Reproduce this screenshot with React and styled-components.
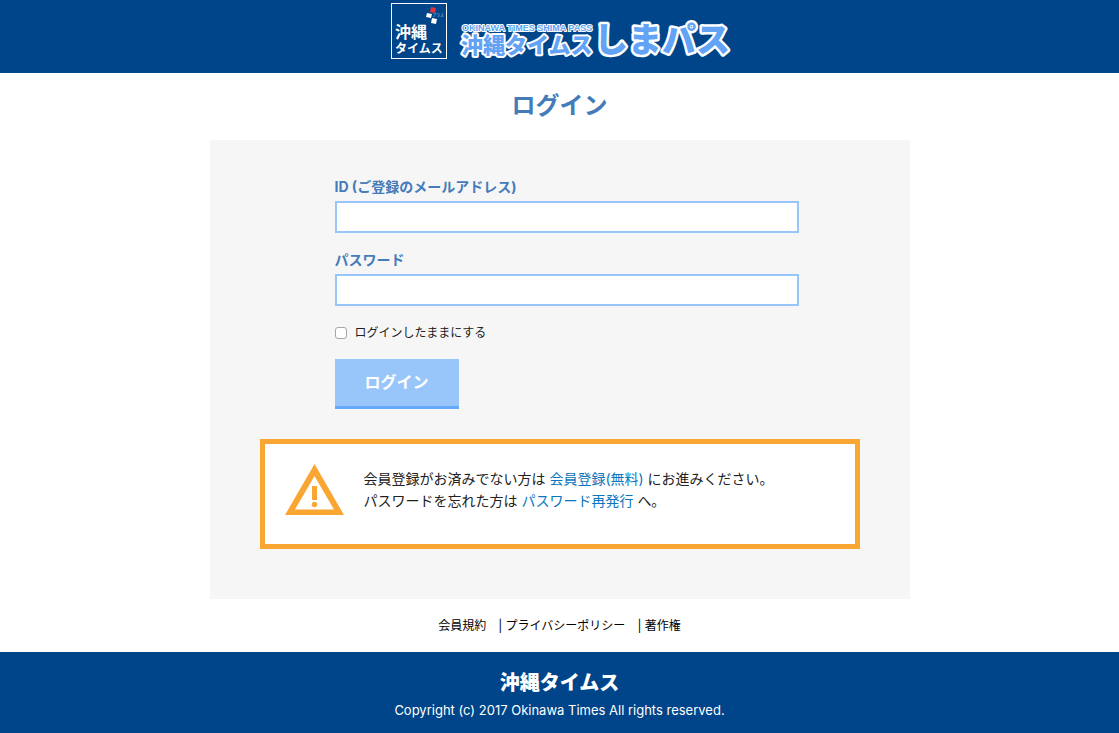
import styled, { createGlobalStyle } from "styled-components";

const GlobalStyle = createGlobalStyle`

    body {
        margin: 0;
        background-color: #ffffff;
        color: #222222;
        font-family: Inter, "Noto Sans CJK JP", sans-serif;
        font-size: 14px;
        line-height: 22px;
    }

    a {
        text-decoration: none;
    }
`;

const Header = styled.header`
    display: flex;
    justify-content: center;
    padding: 3px 0 14px;
    background-color: #004489;

    a, svg {
        display: block;
    }

    svg {
        overflow: visible;
    }
`;

const Title = styled.h1`
    margin: 0;
    padding: 16px 0 17px;
    color: #447bb9;
    font-size: 24px;
    line-height: 34px;
    text-align: center;
`;

const Panel = styled.main`
    box-sizing: border-box;
    width: 100%;
    max-width: 700px;
    margin: 0 auto;
    padding: 36px 50px 50px;
    background-color: #f6f6f6;
`;

const Form = styled.form`
    padding: 0 75px;
`;

const Field = styled.div`
    margin-bottom: 16px;

    label {
        display: block;
        margin-bottom: 3px;
        color: #447bb9;
        font-weight: bold;
    }

    input {
        display: block;
        width: 100%;
        height: 18px;
        padding: 5px;
        border: 2px solid #99c6fa;
        border-radius: 0;
        background-color: #ffffff;
        font-size: 14px;
        outline: none;
    }

    input:focus {
        border-color: #66a9fb;
    }
`;

const Remember = styled.label`
    display: flex;
    align-items: center;
    gap: 8px;
    margin-bottom: 15px;
    font-size: 12px;

    input {
        appearance: none;
        box-sizing: border-box;
        width: 12px;
        height: 12px;
        margin: 0;
        border: 1px solid #a6a6a6;
        border-radius: 3px;
        background-color: #ffffff;
    }

    input:checked {
        background-color: #447bb9;
    }
`;

const SubmitButton = styled.button`
    display: block;
    height: 50px;
    padding: 0 30px 4px;
    border: none;
    border-bottom: 3px solid #66a9fb;
    background-color: #99c6fa;
    color: #ffffff;
    font-family: inherit;
    font-size: 16px;
    font-weight: bold;
    cursor: pointer;
`;

const Notice = styled.div`
    display: flex;
    align-items: flex-start;
    gap: 20px;
    margin-top: 30px;
    padding: 20px 20px 28px;
    border: 5px solid #faa632;
    background-color: #ffffff;

    svg {
        flex-shrink: 0;
    }

    p {
        margin: 0;
        padding-top: 4px;
    }

    a {
        color: #0b76bd;
    }
`;

const FooterLinks = styled.nav`
    padding: 16px 0 15px;
    color: #000000;
    font-size: 12px;
    text-align: center;

    a {
        color: #000000;
    }
`;

const Footer = styled.footer`
    padding: 19px 0 12px;
    background-color: #004489;
    color: #ffffff;
    text-align: center;

    strong {
        display: block;
        font-size: 20px;
        font-weight: 900;
        line-height: 24px;
        margin-bottom: 5px;
    }

    small {
        display: block;
        font-size: 13px;
        line-height: 21px;
    }
`;

const logoFont = '"Noto Sans CJK JP", sans-serif';

function Logo() {
    return (
        <svg width="338" height="56" viewBox="0 0 338 56" fontFamily={logoFont}>
            <rect x="0.5" y="0.5" width="55" height="55" fill="#004489" stroke="#ffffff" />
            <path d="M40 4l5 1-1 5-5-1z" fill="#e23338" />
            <path d="M36 10l5 1-1 4-5-1zM41 15l5 1-1 5-5-1z" fill="#ffffff" />
            <text x="41" y="14" fontSize="4" fill="#b3c6db">プラス</text>
            <g fill="#ffffff" fontWeight="bold">
                <text x="4" y="35" fontSize="16">沖縄</text>
                <text x="4" y="50" fontSize="12">タイムス</text>
            </g>

            <g fill="#62a3f5" stroke="#ffffff" strokeLinejoin="round" paintOrder="stroke" fontWeight="900">
                <text x="70" y="50" fontSize="22" strokeWidth="4">沖縄タイムス</text>
                <text x="203" y="49" fontSize="34" strokeWidth="5">しまパス</text>
                <text x="71" y="28" fontSize="9" strokeWidth="2" fontWeight="bold" fontFamily='"Liberation Sans", sans-serif'>OKINAWA TIMES SHIMA PASS</text>
            </g>
        </svg>
    );
}

function WarningIcon() {
    return (
        <svg width="59" height="52" viewBox="0 0 59 52" fill="#faa632">
            <path fillRule="evenodd" d="M29.5 0L59 51H0zM29.5 12L10 45.500H49z" />
            <path d="M27 22h5v14h-5z" />
            <circle cx="29.500" cy="40.500" r="2.700" />
        </svg>
    );
}

export default function App() {

    function handleSubmit(e) {
        e.preventDefault();
    }

    return (
        <>
            <GlobalStyle />

            <Header>
                <a href="/" aria-label="沖縄タイムス しまパス">
                    <Logo />
                </a>
            </Header>

            <Title>ログイン</Title>

            <Panel>
                <Form onSubmit={handleSubmit}>
                    <Field>
                        <label htmlFor="email">ID (ご登録のメールアドレス)</label>
                        <input id="email" type="text" />
                    </Field>
                    <Field>
                        <label htmlFor="password">パスワード</label>
                        <input id="password" type="password" />
                    </Field>
                    <Remember>
                        <input type="checkbox" />
                        ログインしたままにする
                    </Remember>
                    <SubmitButton type="submit">ログイン</SubmitButton>
                </Form>

                <Notice>
                    <WarningIcon />
                    <p>
                        会員登録がお済みでない方は <a href="/register">会員登録(無料)</a> にお進みください。<br />
                        パスワードを忘れた方は <a href="/reissue">パスワード再発行</a> へ。
                    </p>
                </Notice>
            </Panel>

            <FooterLinks>
                <a href="/terms">会員規約</a>　| <a href="/privacy">プライバシーポリシー</a>　| <a href="/copyright">著作権</a>
            </FooterLinks>

            <Footer>
                <strong>沖縄タイムス</strong>
                <small>Copyright (c) 2017 Okinawa Times All rights reserved.</small>
            </Footer>
        </>
    );
}
